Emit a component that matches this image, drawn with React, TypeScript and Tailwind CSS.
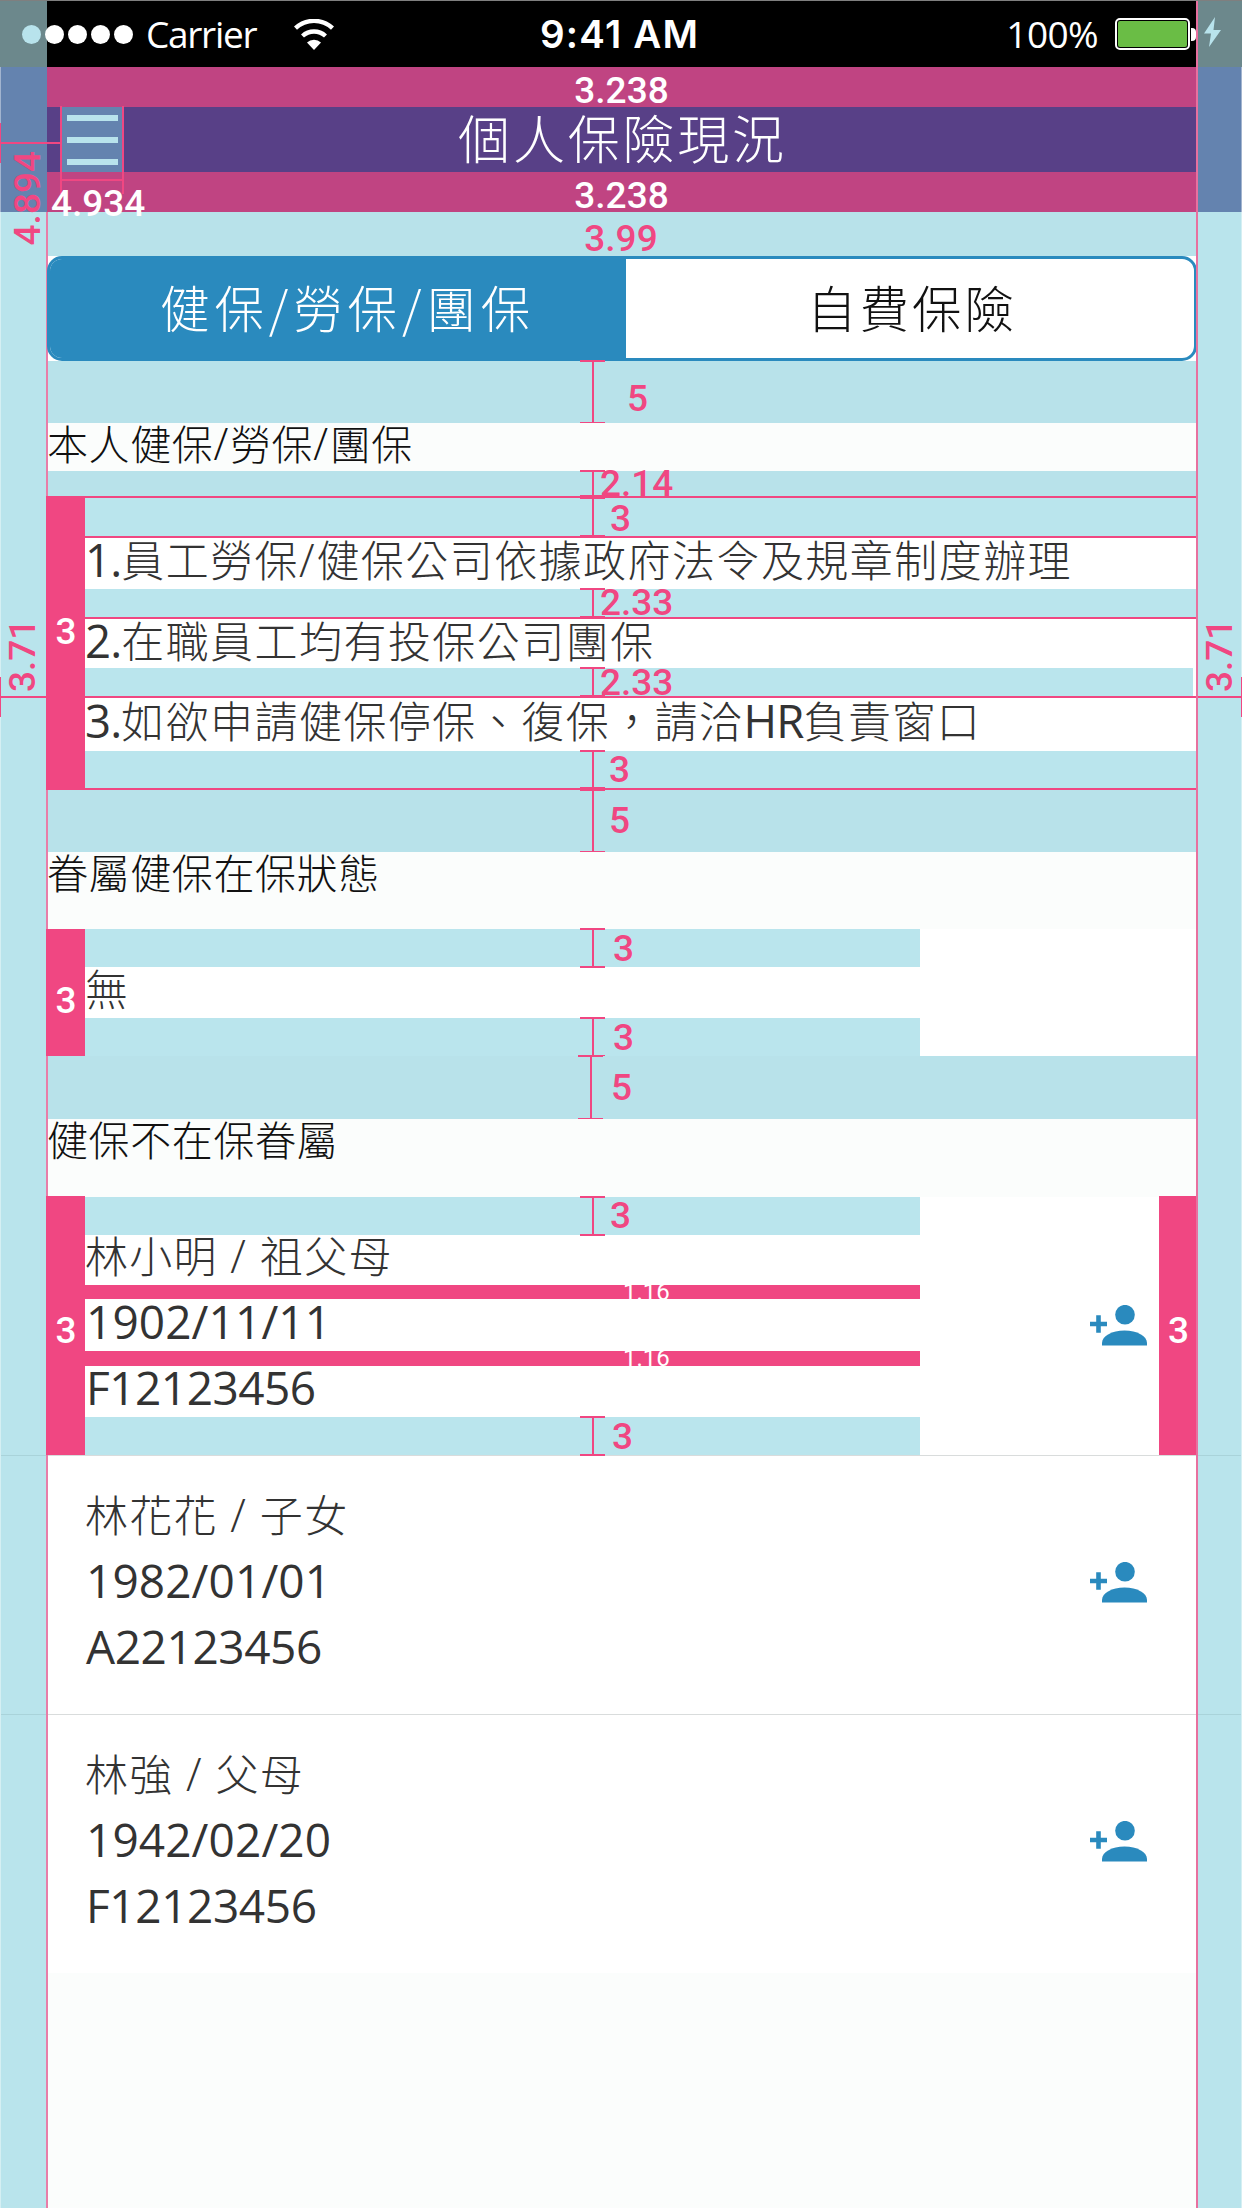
import React, { type ReactNode } from "react";

const LATIN = "font-['Open_Sans','Noto_Sans_CJK_TC',sans-serif]";

/** Chinese copy in which the Latin runs are set slightly larger. */
function Mixed({ text }: { text: string }) {
  return (
    <>
      {text.split(/([\x21-\x7e]+)/).map((part, i) =>
        i % 2 ? (
          <span key={i} className={`${LATIN} text-[1.06em] ${part === "/" ? "font-light tracking-[0.04em]" : "font-normal tracking-[-0.02em]"}`}>
            {part}
          </span>
        ) : (
          <span key={i}>{part}</span>
        ),
      )}
    </>
  );
}

/** Figures of a measured distance. */
function Value({ children, className = "" }: { children: string; className?: string }) {
  return (
    <span className={`shrink-0 whitespace-nowrap font-['Roboto',sans-serif] text-[37px] leading-9 font-medium ${className}`}>
      {children}
    </span>
  );
}

/** Vertical dimension marker with end ticks. */
function Gauge() {
  return (
    <div className="-my-px flex w-[25px] shrink-0 justify-center self-stretch border-y-2 border-[#f04782]">
      <div className="w-[2px] bg-[#f04782]" />
    </div>
  );
}

/** Blue spacing band carrying a marker and its value. */
function Band({ value, className, valueClass }: { value: string; className: string; valueClass: string }) {
  return (
    <div className={`flex items-center text-[#f04782] ${className}`}>
      <Gauge />
      <Value className={valueClass}>{value}</Value>
    </div>
  );
}

/** Solid inset bar with its value in the middle. */
function Inset({ className }: { className: string }) {
  return (
    <div className={`flex shrink-0 items-center justify-center bg-[#f04782] text-white ${className}`}>
      <Value>3</Value>
    </div>
  );
}

function AddPerson() {
  return (
    <svg viewBox="0 0 57 41" className="h-[41px] w-[57px] fill-[#2a8abe]">
      <path d="M6.2 10.3h4.6v6.5H17v4.4h-6.2v6.5H6.2v-6.5H0v-4.4h6.2z" />
      <circle cx="35" cy="9.7" r="9.8" />
      <path d="M12 40.5V38C12 31 22 25.5 34.5 25.5S57 31 57 38v2.5z" />
    </svg>
  );
}

function SectionTitle({ children, className }: { children: string; className: string }) {
  return (
    <h2 className={`bg-[#fbfdfc] text-[41px] leading-[38px] font-light tracking-[0.6px] text-[#111] -indent-px ${className}`}>
      <Mixed text={children} />
    </h2>
  );
}

function PersonName({ children }: { children: string }) {
  return (
    <p className="h-[50px] text-[43px] leading-[38px] font-light tracking-[1.3px] whitespace-pre [word-spacing:1.5px]">
      <Mixed text={children} />
    </p>
  );
}

function MeasuredPerson({ name, born, id }: { name: string; born: string; id: string }) {
  return (
    <div className="flex h-[259px] border-b border-[#d9dcdc] bg-white text-[#333]">
      <Inset className="-mt-px -ml-[2px] w-[39px] pt-[10px] pl-px" />
      <div className="w-[835px]">
        <Band value="3" className="h-[38px] bg-[#bae5ed] pl-[495px]" valueClass="ml-[5px]" />
        <PersonName>{name}</PersonName>
        <div className="flex h-[14px] items-center bg-[#f04782] pl-[538px] text-white">
          <span className="font-['Roboto',sans-serif] text-[24px] leading-[14px]">1.16</span>
        </div>
        <p className={`h-[52px] ${LATIN} pl-px text-[46px] leading-[45px] tracking-[0.1px]`}>{born}</p>
        <div className="flex h-[15px] items-center bg-[#f04782] pl-[538px] text-white">
          <span className="font-['Roboto',sans-serif] text-[24px] leading-[15px]">1.16</span>
        </div>
        <p className={`h-[51px] ${LATIN} pl-px text-[46px] leading-[43px] tracking-[-0.5px]`}>{id}</p>
        <Band value="3" className="h-[38px] bg-[#bae5ed] pl-[495px]" valueClass="ml-[7px] mt-[2px]" />
      </div>
      <div className="mt-[108px] mr-[12px] ml-[170px]">
        <AddPerson />
      </div>
      <Inset className="-mt-px -mr-px w-[38px] pt-[10px] pl-px" />
    </div>
  );
}

function Person({ name, born, id, className }: { name: string; born: string; id: string; className: string }) {
  return (
    <div className={`flex items-start justify-between bg-white pr-[49px] pl-[37px] text-[#333] ${className}`}>
      <div className="flex flex-col pt-[38px]">
        <PersonName>{name}</PersonName>
        <p className={`mt-[14px] h-[52px] ${LATIN} pl-px text-[46px] leading-[45px] tracking-[0.1px]`}>{born}</p>
        <p className={`mt-[15px] h-[51px] ${LATIN} pl-px text-[46px] leading-[43px] tracking-[-0.4px]`}>{id}</p>
      </div>
      <div className="mt-[106px]">
        <AddPerson />
      </div>
    </div>
  );
}

function StatusBar() {
  return (
    <div className="flex h-[67px] w-full items-center border-t border-[#7f7f7f] bg-[linear-gradient(90deg,#6c888c_47px,#000_47px,#000_1196px,#e8709f_1196px,#e8709f_1198px,#6c888c_1198px)] text-white">
      <div className="ml-[22px] flex gap-[4px]">
        <i className="size-[19px] rounded-full bg-[#b8e3ec]" />
        <i className="size-[19px] rounded-full bg-white" />
        <i className="size-[19px] rounded-full bg-white" />
        <i className="size-[19px] rounded-full bg-white" />
        <i className="size-[19px] rounded-full bg-white" />
      </div>
      <span className={`ml-[13px] w-[112px] ${LATIN} text-[37px] leading-[40px] tracking-[-1.3px]`}>Carrier</span>
      <svg viewBox="0 0 40 31" className="ml-[36px] h-[31px] w-[40px]">
        <g fill="none" stroke="#fff" strokeWidth="4.4">
          <path d="M1.5 9.2A27 27 0 0 1 38.500 9.200" />
          <path d="M8.500 17A17 17 0 0 1 31.500 17" />
        </g>
        <path d="M13 23.500A10 10 0 0 1 27 23.500L20 31z" fill="#fff" />
      </svg>
      <span className="ml-[206px] font-['Inter',sans-serif] text-[38.5px] leading-[44px] font-semibold tracking-[1.2px] whitespace-nowrap">
        9:41 AM
      </span>
      <span className={`ml-auto ${LATIN} text-[37px] leading-[40px] tracking-[-0.6px]`}>100%</span>
      <div className="ml-[17px] h-[32px] w-[75px] rounded-[5px] border-2 border-white p-[1px]">
        <div className="h-full rounded-[2px] bg-[#6abd45]" />
      </div>
      <div className="ml-[1px] h-[13px] w-[5px] rounded-r-[4px] bg-white" />
      <svg viewBox="0 0 17 30" className="mr-[21px] mb-[5px] ml-[8px] h-[30px] w-[17px]">
        <path d="M11 0 0 16.500h7L5 30 17 13H9.500z" fill="#b8e3ec" />
      </svg>
    </div>
  );
}

function Header() {
  return (
    <header className="relative flex h-[145px]">
      <div className="w-[47px] border-l border-white/40 bg-[#6483af]" />
      <div className="flex flex-1 flex-col">
        <div className="flex h-[40px] items-center justify-center bg-[#c04482] pt-[8px] text-white">
          <Value>3.238</Value>
        </div>
        <div className="flex h-[65px] bg-[#584087]">
          <div className="ml-[14px] flex w-[62px] flex-col items-center justify-center gap-[16px] bg-[#6483af]">
            <i className="h-[6px] w-[51px] bg-[#b8e3ec]" />
            <i className="h-[6px] w-[51px] bg-[#b8e3ec]" />
            <i className="h-[6px] w-[51px] bg-[#b8e3ec]" />
          </div>
          <h1 className="flex-1 pr-[74px] text-center text-[52px] leading-[60px] font-light tracking-[2.8px] text-white">
            個人保險現況
          </h1>
        </div>
        <div className="flex h-[40px] items-center justify-center bg-[#c04482] pt-[8px] text-white">
          <Value>3.238</Value>
        </div>
      </div>
      <div className="w-[46px] border-r border-l-2 border-r-white/40 border-l-[#e8709f] bg-[#6483af]" />

      {/* Menu icon dimensions, laid over the bar */}
      <div className="absolute top-[39px] left-[60px] flex h-[88px] w-[64px] flex-col justify-end border-x-2 border-[#f04782] pb-[13px]">
        <div className="h-[2px] bg-[#f04782]" />
      </div>
      <div className="absolute top-[56px] left-0 flex h-[40px] w-[61px] items-center border-l border-[#f04782]">
        <div className="h-[2px] flex-1 bg-[#f04782]" />
      </div>
      <Value className="absolute top-[119px] left-[51px] text-white">4.934</Value>
      <Value className="absolute top-[84px] left-[10px] rotate-180 text-[#f04782] [writing-mode:vertical-rl]">4.894</Value>
    </header>
  );
}

function Rail({ className, children }: { className: string; children: ReactNode }) {
  return (
    <div className={`flex shrink-0 flex-col bg-[#b9e4ec] ${className}`}>
      <div className="h-[1243px] pt-[406px]">{children}</div>
      <div className="h-px bg-[#a9d3da]" />
      <div className="h-[258px]" />
      <div className="h-px bg-[#a9d3da]" />
    </div>
  );
}

function Rule({ text, className }: { text: string; className: string }) {
  return (
    <p className={`border-t-2 border-[#f04782] bg-white ${className}`}>
      <Mixed text={text} />
    </p>
  );
}

export default function App() {
  return (
    <div className="flex h-[2208px] w-[1242px] flex-col overflow-hidden bg-[#fbfdfc] font-['Noto_Sans_CJK_TC',sans-serif]">
      <StatusBar />
      <Header />

      <div className="flex flex-1">
        <Rail className="w-[48px] border-r-2 border-l border-r-[#e87da8] border-l-white/40">
          <Value className="ml-[4px] block h-[74px] w-[36px] rotate-180 text-center text-[#f04782] [writing-mode:vertical-rl]">3.71</Value>
          <div className="-mt-[15px] -ml-px flex h-[40px] items-center border-l border-[#f04782]">
            <div className="h-[2px] flex-1 bg-[#f04782]" />
          </div>
        </Rail>

        <main className="flex w-[1148px] flex-col">
          <div className="flex h-[44px] items-center justify-center bg-[#b8e2ea] pt-[9px] pr-[2px] text-[#f04782]">
            <Value>3.99</Value>
          </div>
          <div className="bg-white">
            <div className="-mx-px flex h-[105px] overflow-hidden rounded-[15px] border-[3px] border-[#2a8abe] bg-white text-[49.5px] leading-[95px] font-light">
              <div className="w-[576px] bg-[#2a8abe] pl-[110px] tracking-[4.9px] whitespace-nowrap text-white">健保/勞保/團保</div>
              <div className="flex-1 pl-[181px] tracking-[3px] text-[#111]">自費保險</div>
            </div>
          </div>
          <Band value="5" className="h-[62px] bg-[#b8e2ea] pl-[532px]" valueClass="ml-[22px] mt-[13px]" />

          <SectionTitle className="h-[48px]">本人健保/勞保/團保</SectionTitle>
          <Band value="2.14" className="h-[25px] bg-[#b8e2ea] pl-[532px]" valueClass="-ml-[5px]" />

          <div className="flex">
            <Inset className="-ml-[2px] w-[39px] pb-[22px] pl-px" />
            <div className="flex flex-1 flex-col border-y-2 border-[#f04782] bg-[#bae5ed] text-[43px] leading-[41px] font-light tracking-[1.45px] text-[#333]">
              <Band value="3" className="h-[38px] pl-[495px] tracking-normal" valueClass="ml-[5px] mt-[4px]" />
              <Rule className="h-[53px] leading-[40px]" text="1.員工勞保/健保公司依據政府法令及規章制度辦理" />
              <Band value="2.33" className="h-[28px] pl-[495px] tracking-normal" valueClass="-ml-[5px]" />
              <Rule className="h-[51px]" text="2.在職員工均有投保公司團保" />
              <Band value="2.33" className="h-[28px] border-r-[3px] border-white pl-[495px] tracking-normal" valueClass="-ml-[5px] mt-[2px]" />
              <Rule className="h-[55px] leading-[43px]" text="3.如欲申請健保停保、復保，請洽HR負責窗口" />
              <Band value="3" className="h-[37px] pl-[495px] tracking-normal" valueClass="ml-[4px] mt-px" />
            </div>
          </div>
          <Band value="5" className="h-[62px] bg-[#b8e2ea] pl-[532px]" valueClass="ml-[4px]" />

          <SectionTitle className="h-[77px]">眷屬健保在保狀態</SectionTitle>
          <div className="flex bg-white text-[#333]">
            <Inset className="-ml-[2px] w-[39px] pt-[17px] pl-px" />
            <div className="w-[835px]">
              <Band value="3" className="h-[38px] bg-[#bae5ed] pl-[495px]" valueClass="ml-[8px] mt-[2px]" />
              <p className="h-[51px] text-[43px] leading-[40px] font-light">無</p>
              <Band value="3" className="h-[38px] bg-[#bae5ed] pl-[495px]" valueClass="ml-[8px] mt-[2px]" />
            </div>
          </div>
          <Band value="5" className="h-[63px] bg-[#b8e2ea] pl-[530px]" valueClass="ml-[8px]" />

          <SectionTitle className="h-[78px]">健保不在保眷屬</SectionTitle>
          <MeasuredPerson name="林小明 / 祖父母" born="1902/11/11" id="F12123456" />
          <Person className="h-[259px] border-b border-[#d9dcdc]" name="林花花 / 子女" born="1982/01/01" id="A22123456" />
          <Person className="h-[258px]" name="林強 / 父母" born="1942/02/20" id="F12123456" />
        </main>

        <Rail className="w-[46px] border-r border-l-2 border-r-white/40 border-l-[#e8709f]">
          <Value className="ml-[4px] block h-[74px] w-[36px] rotate-180 text-center text-[#f04782] [writing-mode:vertical-rl]">3.71</Value>
          <div className="-mt-[15px] -mr-px flex h-[40px] items-center border-r border-[#f04782]">
            <div className="h-[2px] flex-1 bg-[#f04782]" />
          </div>
        </Rail>
      </div>
    </div>
  );
}
